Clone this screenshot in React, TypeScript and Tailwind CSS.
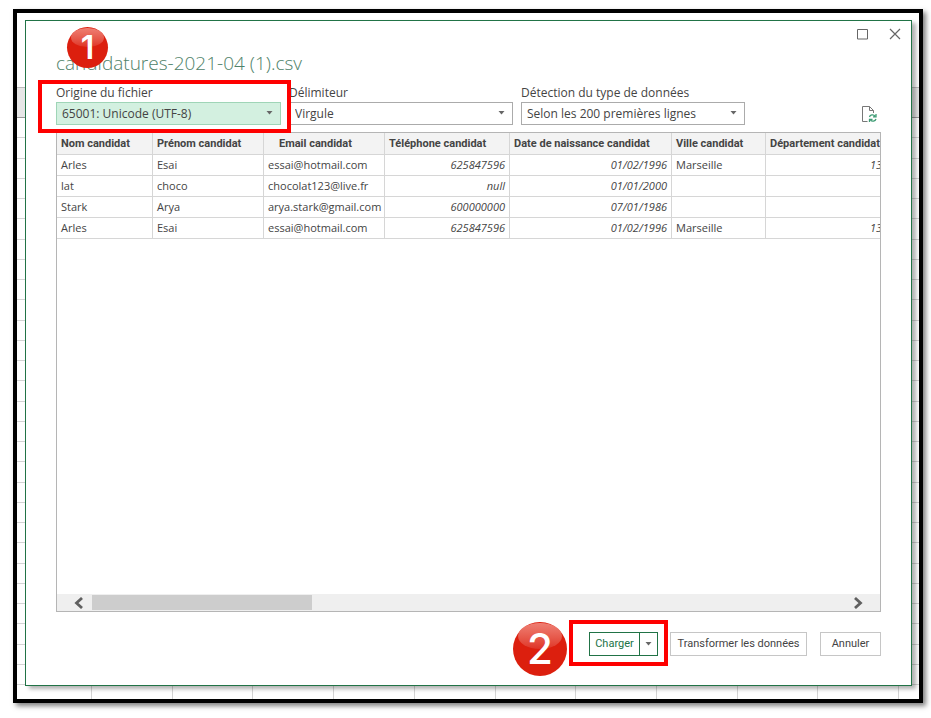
import type { ReactNode } from "react";

type Column = {
  title: string;
  width: string;
  headPad?: string;
  numeric?: boolean;
};

const columns: Column[] = [
  { title: "Nom candidat", width: "w-24" },
  { title: "Prénom candidat", width: "w-[111px]" },
  { title: "Email candidat", width: "w-[121px]", headPad: "pl-[15px]" },
  { title: "Téléphone candidat", width: "w-[125px]", numeric: true },
  { title: "Date de naissance candidat", width: "w-[162px]", numeric: true },
  { title: "Ville candidat", width: "w-[94px]" },
  { title: "Département candidat", width: "w-[121px]", numeric: true },
];

const rows: string[][] = [
  ["Arles", "Esai", "essai@hotmail.com", "625847596", "01/02/1996", "Marseille", "13"],
  ["lat", "choco", "chocolat123@live.fr", "null", "01/01/2000", "", ""],
  ["Stark", "Arya", "arya.stark@gmail.com", "600000000", "07/01/1986", "", ""],
  ["Arles", "Esai", "essai@hotmail.com", "625847596", "01/02/1996", "Marseille", "13"],
];

function Caret({ className = "" }: { className?: string }) {
  return (
    <svg className={className} width="7" height="4" viewBox="0 0 7 4" aria-hidden="true">
      <path d="M0.500 0h6L3.500 3.500z" fill="#666" />
    </svg>
  );
}

function Sheet() {
  return (
    <div className="absolute inset-0 flex flex-col" aria-hidden="true">
      <div className="h-[74px] shrink-0" />
      <div className="h-[31px] shrink-0 border-t border-b border-t-[#bbb] border-b-[#999] bg-[#e6e6e6]" />
      <div className="flex flex-1 flex-col">
        {Array.from({ length: 28 }, (_, i) => (
          <div key={i} className="flex-1 border-b border-[#d4d4d4]" />
        ))}
      </div>
      <div className="flex h-[14px] shrink-0">
        <div className="w-[75px] border-r border-[#d4d4d4]" />
        {Array.from({ length: 10 }, (_, i) => (
          <div key={i} className="flex-1 border-r border-[#d4d4d4]" />
        ))}
        <div className="w-5" />
      </div>
    </div>
  );
}

function StepBadge({ children, className }: { children: ReactNode; className: string }) {
  return (
    <span
      className={`absolute z-20 flex items-center justify-center rounded-full bg-[#dc1f0e] font-['Inter',sans-serif] text-white ${className}`}
    >
      <span className="absolute inset-x-[10%] top-[2%] h-[48%] rounded-[50%] bg-gradient-to-b from-[#ee7e73] to-[#df3325]" />
      <span className="relative">{children}</span>
    </span>
  );
}

function Field({
  id,
  label,
  value,
  active = false,
  children,
}: {
  id: string;
  label: string;
  value: string;
  active?: boolean;
  children?: ReactNode;
}) {
  return (
    <div className={`relative ${active ? "w-[225px]" : "w-56"}`}>
      <label htmlFor={id} className="block h-[17px] text-xs leading-4">
        {label}
      </label>
      <div className="relative">
        <select
          id={id}
          defaultValue={value}
          className={`block h-[23px] w-full appearance-none rounded-none border pl-[5px] pr-5 text-xs text-[#444] outline-none ${
            active ? "border-[#9fd5b7] bg-[#d3f0e0]" : "border-[#ababab] bg-white"
          }`}
        >
          <option>{value}</option>
        </select>
        <Caret className="pointer-events-none absolute right-2 top-[9px]" />
      </div>
      {children}
    </div>
  );
}

function RefreshFileIcon() {
  return (
    <svg width="16" height="18" viewBox="0 0 16 18" fill="none" aria-hidden="true">
      <path d="M6.500 16.500H1.500V1.500H8.500L12.500 5.500V8" stroke="#777" />
      <path d="M8.500 1.500V5.500H12.500" stroke="#777" />
      <path d="M8.500 12C9 9.800 12.500 9 14 11.200M15 9V11.800H12" stroke="#3f9c75" strokeWidth="1.300" />
      <path d="M15 14C14.300 16.200 11 17 9.500 14.800M8.500 17V14.300H11.500" stroke="#3f9c75" strokeWidth="1.300" />
    </svg>
  );
}

export default function App() {
  return (
    <div className="flex min-h-screen flex-col bg-white pb-[15px] pl-[13px] pr-2 pt-[9px] font-['Open_Sans','Noto_Sans',sans-serif] text-[#444]">
      <div className="relative flex flex-1 flex-col border-4 border-black bg-white pb-[13px] pl-2 pr-[7px] pt-[7px] shadow-[3px_3px_5px_rgba(0,0,0,0.5)]">
        <Sheet />
        <main className="relative flex flex-1 flex-col border border-[#217346] bg-white pb-[29px] pl-[30px] pr-[30px] shadow-[4px_3px_4px_rgba(0,0,0,0.3)]">
          <div className="-mr-[20px] flex h-[30px] items-start justify-end gap-5 pt-[7px]">
            <button type="button" aria-label="Agrandir">
              <svg width="12" height="12" viewBox="0 0 12 12" fill="none">
                <path d="M0.500 1.500H10.500V11H0.500z" stroke="#666" />
              </svg>
            </button>
            <button type="button" aria-label="Fermer">
              <svg width="12" height="12" viewBox="0 0 12 12" fill="none">
                <path d="M1 1L11 11M11 1L1 11" stroke="#666" strokeWidth="1.200" />
              </svg>
            </button>
          </div>

          <div className="relative h-[34px]">
            <h1 className="text-[19px] font-light leading-6 text-[#4f8269]">
              candidatures-2021-04 (1).csv
            </h1>
            <StepBadge className="-top-6 left-[11px] size-[41px] text-[32px] font-semibold leading-8">1</StepBadge>
          </div>

          <div className="flex gap-2">
            <Field id="origine" label="Origine du fichier" value="65001: Unicode (UTF-8)" active>
              <div className="pointer-events-none absolute -bottom-2 -left-[18px] -right-[10px] -top-[5px] z-10 border-4 border-[#fe0000]" />
            </Field>
            <Field id="delimiteur" label="Délimiteur" value="Virgule" />
            <Field id="detection" label="Détection du type de données" value="Selon les 200 premières lignes" />
            <button type="button" aria-label="Actualiser" className="mb-[2px] ml-auto mr-1 self-end">
              <RefreshFileIcon />
            </button>
          </div>

          <section className="mt-[7px] flex flex-1 flex-col overflow-hidden border border-[#b5b5b5]">
            <div className="flex-1 overflow-hidden">
              <table className="w-[830px] table-fixed border-separate border-spacing-0 whitespace-nowrap text-[11px] leading-5">
                <thead className="font-['Roboto',sans-serif]">
                  <tr className="bg-[#f3f3f3]">
                    {columns.map((c) => (
                      <th
                        key={c.title}
                        scope="col"
                        className={`h-[22px] border-b border-r border-[#d6d6d6] p-0 text-left font-bold ${c.width} ${c.headPad ?? "pl-1"}`}
                      >
                        {c.title}
                      </th>
                    ))}
                  </tr>
                </thead>
                <tbody>
                  {rows.map((r, i) => (
                    <tr key={i}>
                      {r.map((v, j) => (
                        <td
                          key={j}
                          className={`h-[21px] border-b border-r border-[#d6d6d6] px-1 py-0 ${columns[j].numeric ? "text-right italic" : ""}`}
                        >
                          {v}
                        </td>
                      ))}
                    </tr>
                  ))}
                </tbody>
              </table>
            </div>
            <div className="flex h-[17px] items-center bg-[#efefef] pl-4 pr-4">
              <button type="button" aria-label="Défiler à gauche" className="w-[19px]">
                <svg width="11" height="12" viewBox="0 0 11 12" fill="none">
                  <path d="M9 1L3.500 6L9 11" stroke="#606060" strokeWidth="2.800" />
                </svg>
              </button>
              <div className="h-[15px] flex-1">
                <div className="h-full w-[220px] bg-[#cdcdcd]" />
              </div>
              <button type="button" aria-label="Défiler à droite">
                <svg width="11" height="12" viewBox="0 0 11 12" fill="none">
                  <path d="M2 1L7.500 6L2 11" stroke="#606060" strokeWidth="2.800" />
                </svg>
              </button>
            </div>
          </section>

          <footer className="mt-5 flex justify-end font-['Roboto',sans-serif] text-[11px]">
            <div className="relative mr-3 flex h-6 border border-[#217346] text-[#217346]">
              <button type="button" className="w-[50px] border-r border-[#217346]">
                Charger
              </button>
              <button type="button" aria-label="Autres options de chargement" className="flex w-[17px] items-center justify-center">
                <Caret />
              </button>
              <div className="pointer-events-none absolute -bottom-[11px] -left-[21px] -right-[11px] -top-[13px] border-4 border-[#fe0000]" />
              <StepBadge className="-left-[77px] -top-[11px] size-[54px] text-[42px] font-medium leading-10">2</StepBadge>
            </div>
            <button type="button" className="mr-[13px] h-6 w-[137px] border border-[#c6c6c6]">
              Transformer les données
            </button>
            <button type="button" className="h-6 w-[61px] border border-[#c6c6c6]">
              Annuler
            </button>
          </footer>
        </main>
      </div>
    </div>
  );
}
